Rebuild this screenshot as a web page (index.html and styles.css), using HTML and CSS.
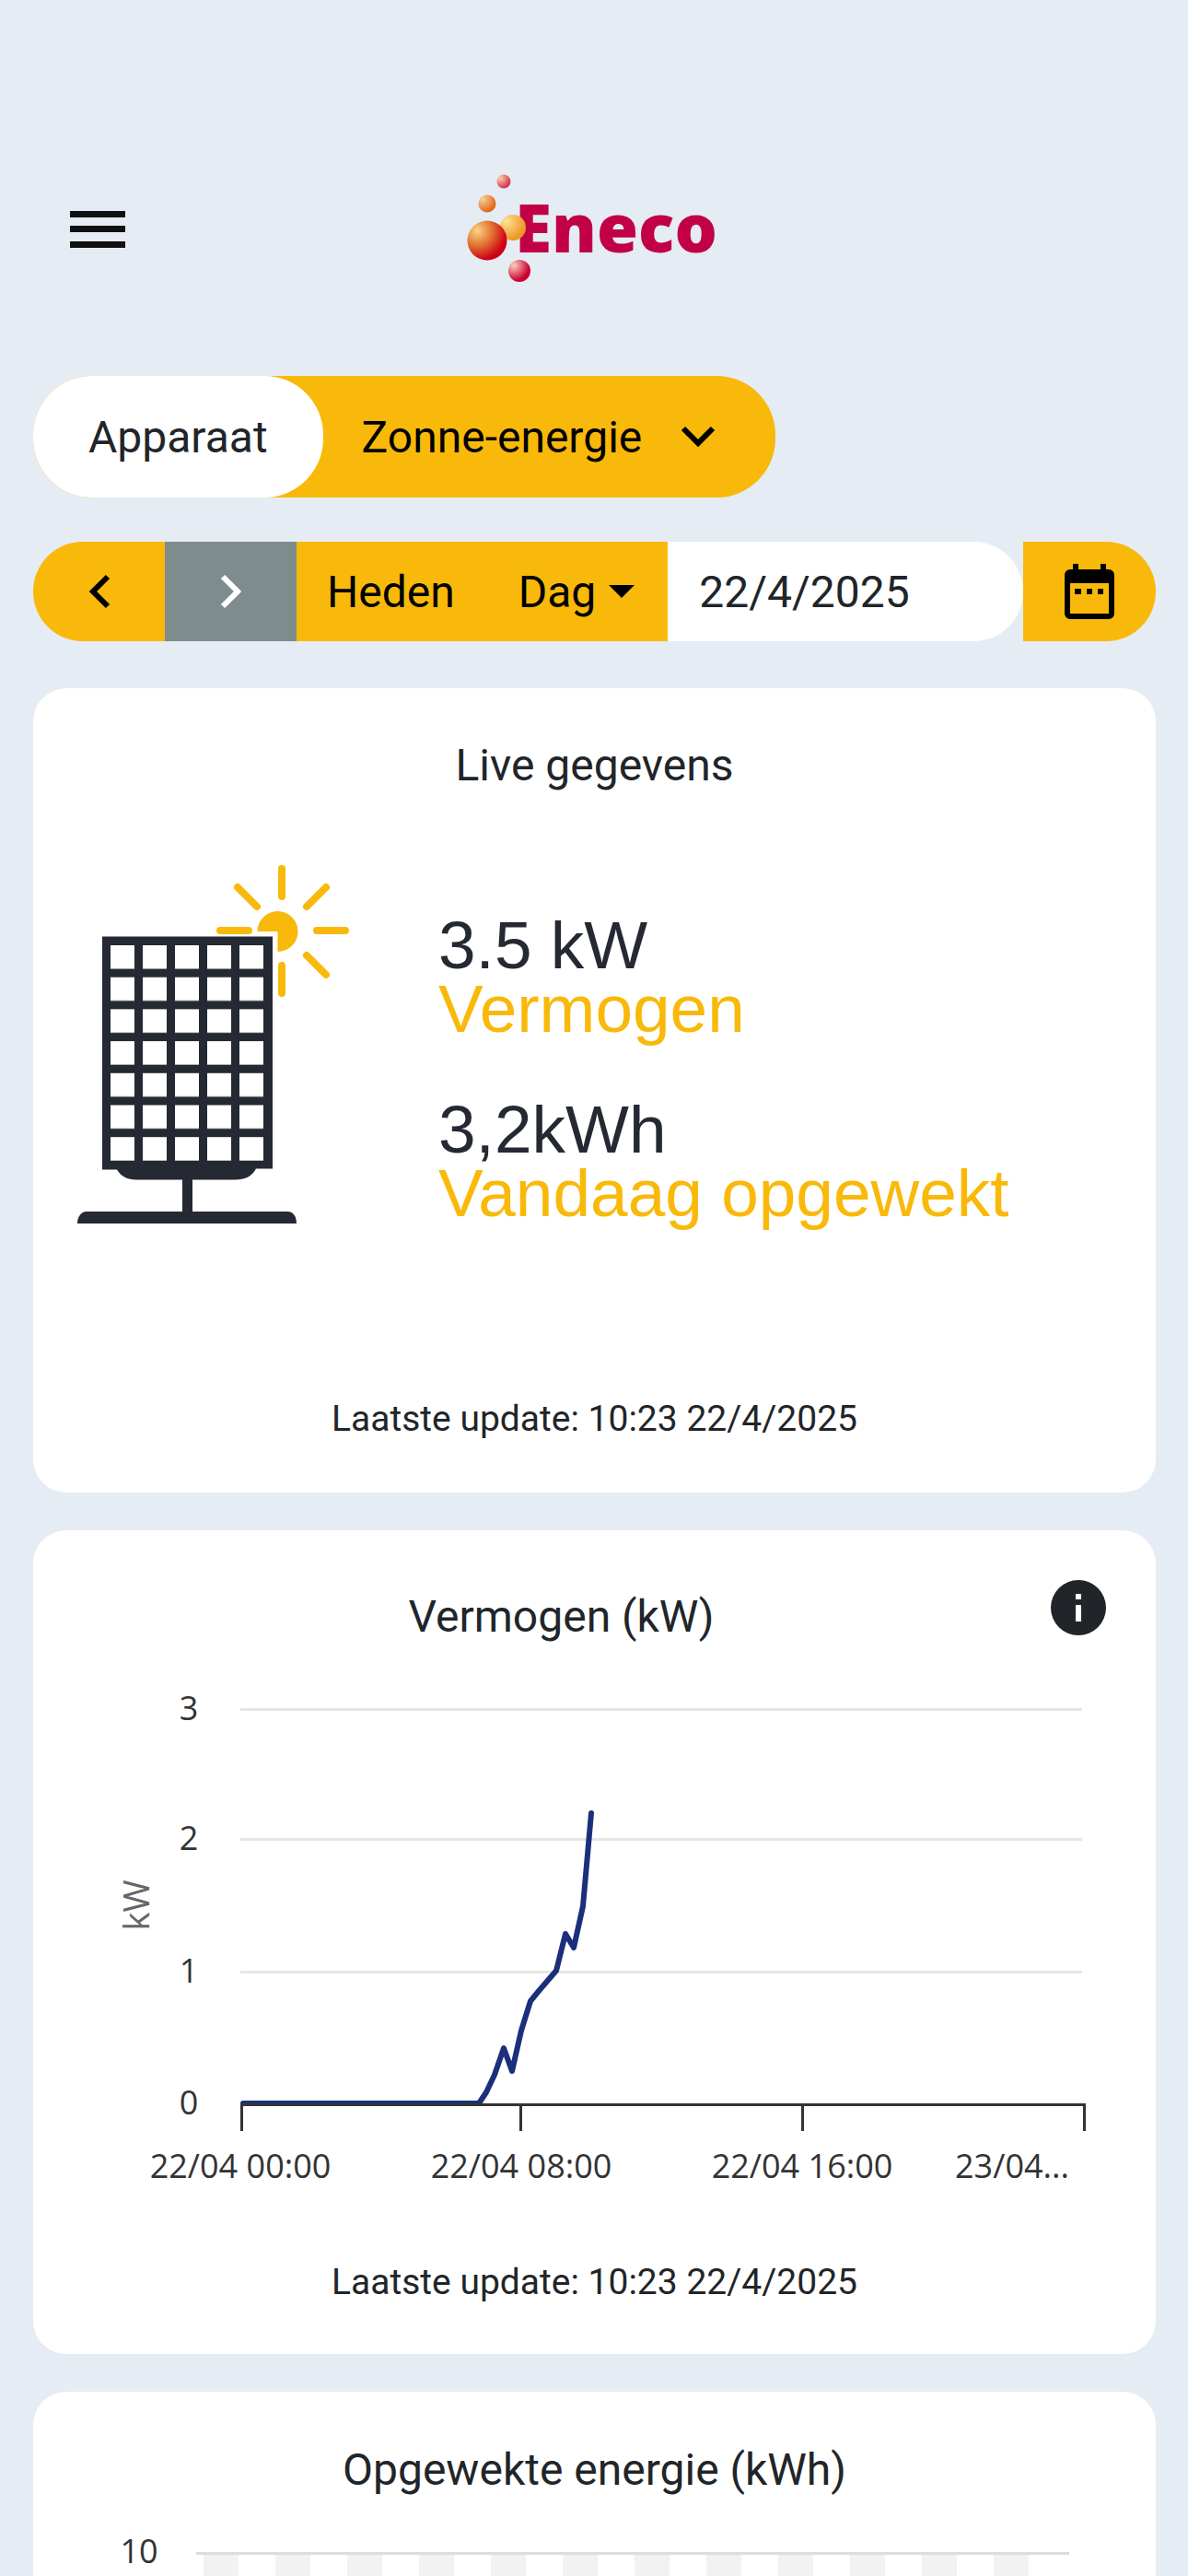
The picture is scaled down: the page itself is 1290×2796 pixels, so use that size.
FILE: index.html
```html
<!DOCTYPE html>
<html lang="nl">
<head>
    <meta charset="UTF-8">
    <meta name="viewport" content="width=device-width, initial-scale=1.0">
    <title>Eneco - Zonne-energie</title>
    <link rel="stylesheet" href="styles.css">
</head>
<body>
    <div class="app">
        <header class="topbar">
            <button class="menu-btn" type="button" aria-label="Menu">
                <svg width="60" height="40" viewBox="0 0 60 40" fill="#111">
                    <rect width="60" height="7"/>
                    <rect y="16" width="60" height="7"/>
                    <rect y="33" width="60" height="7"/>
                </svg>
            </button>
            <a class="logo" href="#" aria-label="Eneco">
                <svg width="272" height="120" viewBox="2 4 272 120">
                    <defs>
                        <radialGradient id="g-red" cx="0.25" cy="0.25" r="0.75">
                            <stop offset="0" stop-color="#fbd683"/>
                            <stop offset="0.5" stop-color="#e27432"/>
                            <stop offset="1" stop-color="#ce0018"/>
                        </radialGradient>
                        <radialGradient id="g-yellow" cx="0.25" cy="0.25" r="0.75">
                            <stop offset="0" stop-color="#fee092"/>
                            <stop offset="1" stop-color="#ed9626"/>
                        </radialGradient>
                        <radialGradient id="g-orange" cx="0.25" cy="0.25" r="0.75">
                            <stop offset="0" stop-color="#f7cf9b"/>
                            <stop offset="1" stop-color="#e26a1c"/>
                        </radialGradient>
                        <radialGradient id="g-pink" cx="0.25" cy="0.25" r="0.75">
                            <stop offset="0" stop-color="#f8d0a8"/>
                            <stop offset="1" stop-color="#d33a50"/>
                        </radialGradient>
                        <radialGradient id="g-crimson" cx="0.25" cy="0.25" r="0.7">
                            <stop offset="0" stop-color="#f9d2be"/>
                            <stop offset="1" stop-color="#cc0030"/>
                        </radialGradient>
                    </defs>
                    <text class="logo-text" x="52" y="89">Eneco</text>
                    <circle cx="50" cy="62" r="14" fill="url(#g-yellow)"/>
                    <circle cx="22" cy="76" r="21.500" fill="url(#g-red)"/>
                    <circle cx="22" cy="36" r="9.500" fill="url(#g-orange)"/>
                    <circle cx="40" cy="12" r="7.500" fill="url(#g-pink)"/>
                    <circle cx="57" cy="109" r="12" fill="url(#g-crimson)"/>
                </svg>
            </a>
        </header>

        <main class="content">
            <div class="device">
                <span class="device-label" id="device-label">Apparaat</span>
                <button class="device-select" type="button" aria-labelledby="device-label device-value">
                    <span id="device-value">Zonne-energie</span>
                    <svg width="36" height="24" viewBox="0 0 36 24" fill="none" stroke="#000" stroke-width="6">
                        <path d="M2 3l16 16L34 3"/>
                    </svg>
                </button>
            </div>

            <div class="datebar">
                <button class="step" type="button" aria-label="Vorige">
                    <svg width="24" height="36" viewBox="0 0 24 36" fill="none" stroke="#000" stroke-width="6">
                        <path d="M21 2L5 18l16 16"/>
                    </svg>
                </button>
                <button class="step step-next" type="button" aria-label="Volgende" disabled>
                    <svg width="24" height="36" viewBox="0 0 24 36" fill="none" stroke="#fff" stroke-width="6">
                        <path d="M3 2l16 16L3 34"/>
                    </svg>
                </button>
                <button class="today" type="button">Heden</button>
                <button class="period" type="button">
                    Dag
                    <svg width="28" height="14" viewBox="0 0 28 14"><path d="M0 0h28L14 14z"/></svg>
                </button>
                <input class="date" type="text" value="22/4/2025" aria-label="Datum">
                <button class="calendar" type="button" aria-label="Kalender">
                    <svg width="54" height="60" viewBox="0 0 54 60">
                        <path fill-rule="evenodd" d="M9 0h6v6h24V0h6v6h3a6 6 0 0 1 6 6v42a6 6 0 0 1-6 6H6a6 6 0 0 1-6-6V12a6 6 0 0 1 6-6h3zM6 21v33h42V21z"/>
                        <path d="M11 27h7v6h-7zM24 27h6v6h-6zM36 27h6v6h-6z"/>
                    </svg>
                </button>
            </div>

            <section class="card live">
                <h2>Live gegevens</h2>
                <div class="live-body">
                    <svg class="panel" width="294" height="390" viewBox="59 0 294 390">
                        <!-- sun -->
                        <g stroke="#f9b90a" stroke-width="8" stroke-linecap="round">
                            <path d="M222 4v30M222 109v30M155 71h31M260 71h31M174 24l21 21M270 24l-21 21M249 98l21 21"/>
                        </g>
                        <path d="M217.500 72H195.500a22 22 0 1 1 22 22z" fill="#f9b90a"/>
                        <!-- panel frame with cells, foot below -->
                        <defs>
                            <pattern id="cells" x="36" y="87" width="35" height="34.700" patternUnits="userSpaceOnUse">
                                <rect width="26" height="25.500" fill="#fff"/>
                            </pattern>
                        </defs>
                        <path d="M27 77.500h185v252h-18c-4 8-12 12-22 12H64c-10 0-17-4-21-11H27z" fill="#252933"/>
                        <rect x="36" y="87" width="167" height="234" fill="url(#cells)"/>
                        <path d="M114 340h11v36h103c7 0 10 6 10 13H0c0-7 4-13 10-13h104z" fill="#252933"/>
                    </svg>
                    <dl class="readings">
                        <div>
                            <dd>3.5 kW</dd>
                            <dt>Vermogen</dt>
                        </div>
                        <div>
                            <dd>3,2kWh</dd>
                            <dt>Vandaag opgewekt</dt>
                        </div>
                    </dl>
                </div>
                <p class="updated">Laatste update: 10:23 22/4/2025</p>
            </section>

            <section class="card power">
                <div class="card-head">
                    <h2>Vermogen (kW)</h2>
                    <button class="info" type="button" aria-label="Info">
                        <svg width="60" height="60" viewBox="0 0 20 20" fill="#212529">
                            <path fill-rule="evenodd" d="M10 0a10 10 0 1 0 0 20 10 10 0 0 0 0-20zm1 15H9V9h2zm0-8H9V5h2z"/>
                        </svg>
                    </button>
                </div>
                <svg class="chart" viewBox="0 0 1219 580">
                    <g stroke="#e6e6e6" stroke-width="3">
                        <path d="M225 54.500h914M225 195.500h914M225 339.500h914"/>
                    </g>
                    <polyline class="series" points="228,482 484,482 492,470 501,451 511,422 520,447 530,403 540,371 549,360 568,338 578,298 587,313 597,268 606,167"/>
                    <path d="M225 483.500h918M226.500 482v30M529.500 482v30M835.500 482v30M1141.500 482v30" fill="none" stroke="#333" stroke-width="3"/>
                    <g class="axis-text">
                        <text x="169" y="66">3</text>
                        <text x="169" y="207">2</text>
                        <text x="169" y="351">1</text>
                        <text x="169" y="494">0</text>
                        <text x="225" y="563">22/04 00:00</text>
                        <text x="530" y="563">22/04 08:00</text>
                        <text x="835" y="563">22/04 16:00</text>
                        <text x="1063" y="563">23/04...</text>
                    </g>
                    <text class="axis-title" transform="translate(126 267) rotate(-90)">kW</text>
                </svg>
                <p class="updated">Laatste update: 10:23 22/4/2025</p>
            </section>

            <section class="card energy">
                <h2>Opgewekte energie (kWh)</h2>
                <svg class="chart" viewBox="0 0 1219 300">
                    <defs>
                        <pattern id="bars" x="185" width="78" height="300" patternUnits="userSpaceOnUse">
                            <rect width="38" height="300" fill="#f2f2f2"/>
                        </pattern>
                    </defs>
                    <rect x="185" y="50" width="897" height="250" fill="url(#bars)"/>
                    <path d="M177 48.500h948" stroke="#ddd" stroke-width="3"/>
                    <text class="axis-text" x="115" y="59">10</text>
                </svg>
            </section>
        </main>
    </div>
</body>
</html>
```

FILE: styles.css
```css
:root {
    --bg: #e5ecf4;
    --yellow: #f9b90a;
    --text: #212529;
    --grey: #7f8c8d;
}

* {
    box-sizing: border-box;
}

body {
    margin: 0;
    background: var(--bg);
    color: var(--text);
    font-family: Roboto, sans-serif;
    font-size: 48px;
}

.app {
    height: 100vh;
    overflow: hidden;
}

button,
input {
    margin: 0;
    padding: 0;
    border: none;
    border-radius: 0;
    background: none;
    color: #000;
    font: inherit;
}

svg {
    display: block;
    overflow: visible;
    flex-shrink: 0;
}

/* Header */
.topbar {
    display: grid;
    grid-template-columns: 1fr auto 1fr;
    align-items: center;
    height: 408px;
    padding: 90px 76px 0;
}

.menu-btn {
    justify-self: start;
}

.logo-text {
    font-family: "Open Sans", sans-serif;
    font-size: 73px;
    font-weight: 800;
    fill: #c20045;
}

.content {
    display: flex;
    flex-direction: column;
    padding: 0 35px 0 36px;
}

/* Device picker */
.device {
    display: flex;
    align-self: flex-start;
    height: 132px;
    margin-bottom: 48px;
    border-radius: 64px;
    background: var(--yellow);
}

.device-label {
    display: flex;
    align-items: center;
    padding: 0 60px;
    border-radius: 64px;
    background: #fff;
}

.device-select {
    display: flex;
    align-items: center;
    gap: 43px;
    padding: 0 66px 0 42px;
}

/* Date navigation */
.datebar {
    display: flex;
    height: 108px;
    margin-bottom: 51px;
}

.datebar button {
    display: flex;
    align-items: center;
    justify-content: center;
    flex-shrink: 0;
    background: var(--yellow);
}

.datebar .step {
    width: 143px;
    border-radius: 54px 0 0 54px;
}

.datebar .step-next {
    border-radius: 0;
    background: var(--grey);
}

.datebar .today {
    padding: 0 33px;
}

.datebar .period {
    gap: 14px;
    padding: 0 36px;
}

.date {
    flex: 1;
    min-width: 0;
    padding: 0 34px;
    border-radius: 0 54px 54px 0;
    background: #fff;
    color: var(--text);
}

.datebar .calendar {
    width: 144px;
    border-radius: 0 54px 54px 0;
}

/* Cards */
.card {
    margin-bottom: 41px;
    border-radius: 36px;
    background: #fff;
}

h2 {
    margin: 0;
    font-size: 48px;
    font-weight: 400;
    line-height: 56px;
    text-align: center;
}

.updated {
    margin: 0;
    font-size: 39px;
    line-height: 48px;
    text-align: center;
}

.live {
    padding: 56px 0;
}

.live-body {
    display: flex;
    gap: 39px;
    height: 657px;
    padding: 80px 0 0 107px;
}

.readings {
    margin: 0;
    padding-top: 52px;
    font-family: "Liberation Sans", Arial, sans-serif;
    font-size: 73px;
    line-height: 69px;
}

.readings div {
    margin-bottom: 62px;
}

.readings dd {
    margin: 0;
    color: #252933;
}

.readings dt {
    color: var(--yellow);
}

.power {
    padding: 54px 0;
}

.card-head {
    display: flex;
    align-items: flex-start;
    padding: 0 54px 0 42px;
}

.card-head h2 {
    flex: 1;
    padding-top: 12px;
}

.chart {
    width: 100%;
}

.power .chart {
    margin: 18px 0 72px;
}

.series {
    fill: none;
    stroke: #1b2f7b;
    stroke-width: 6;
    stroke-linejoin: round;
    stroke-linecap: round;
}

.axis-text {
    font-family: "Open Sans", "Segoe UI", sans-serif;
    font-size: 36px;
    fill: #333;
    text-anchor: middle;
}

.axis-title {
    font-family: "Open Sans", "Segoe UI", sans-serif;
    font-size: 38px;
    fill: #666;
    text-anchor: middle;
}

.energy {
    padding-top: 57px;
}

.energy .chart {
    margin-top: 14px;
}
```
